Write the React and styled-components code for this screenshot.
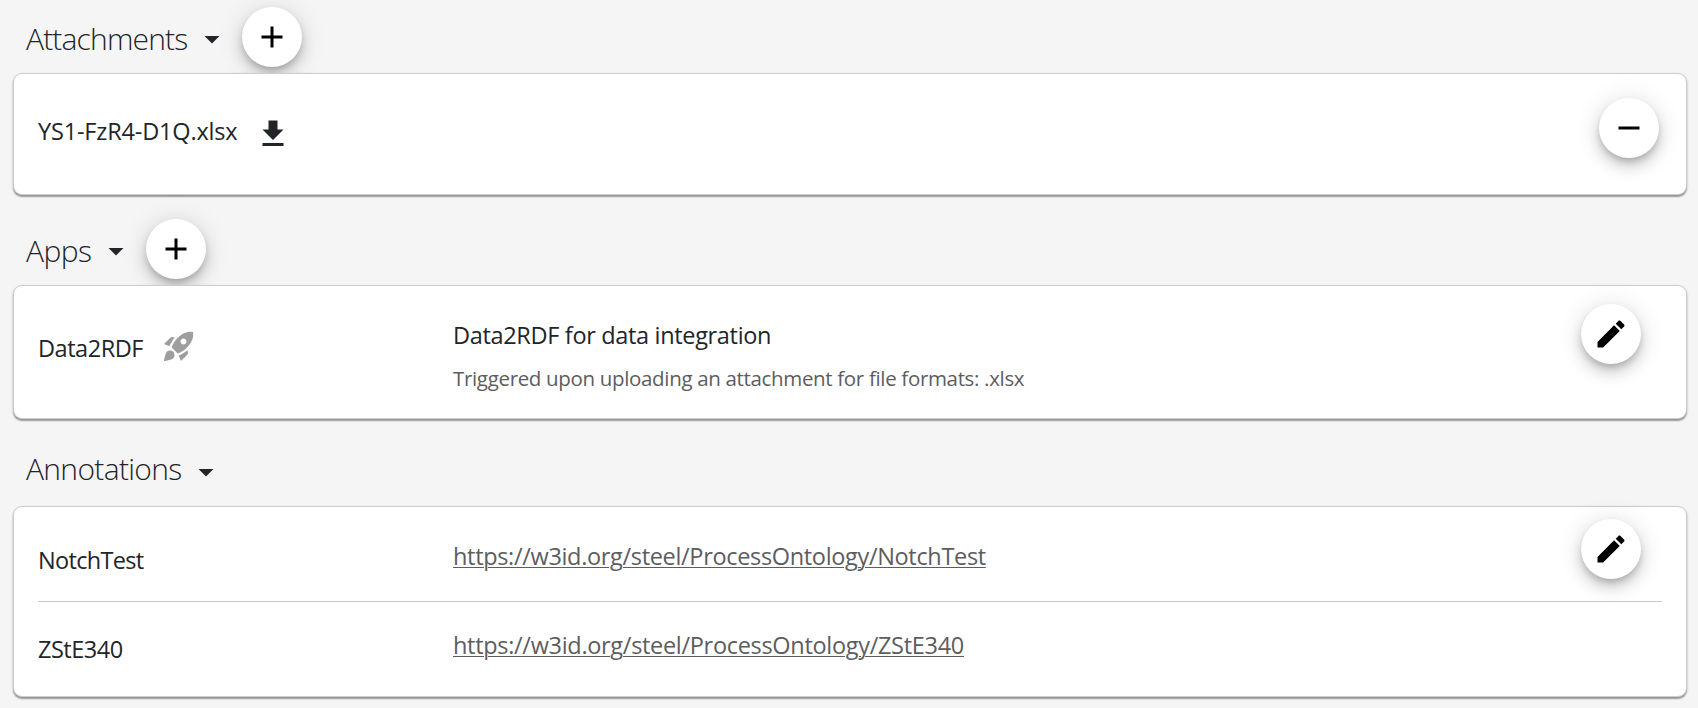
import React from 'react';
import styled, { createGlobalStyle } from 'styled-components';

const GlobalStyle = createGlobalStyle`
  * { box-sizing: border-box; }
  body {
    margin: 0;
    background: #f5f5f5;
    color: #212529;
    font-family: 'Segoe UI', 'Open Sans', 'Noto Sans', sans-serif;
    overflow: hidden;
  }
`;

const Page = styled.main`
  height: 708px;
  padding: 0 11px 0 13px;
`;

const Header = styled.header`
  display: flex;
  align-items: flex-start;
  height: ${(p) => p.$height}px;
  padding: ${(p) => p.$top}px 0 0 13px;
`;

const Heading = styled.h2`
  margin: 12px 0 0;
  width: ${(p) => p.$width}px;
  font-size: 30px;
  font-weight: 300;
  line-height: 40px;
  letter-spacing: ${(p) => p.$spacing}px;
  white-space: nowrap;
`;

const Icon = styled.svg`
  display: block;
  flex: none;
  width: 36px;
  height: 36px;
  fill: ${(p) => p.$color || 'currentColor'};
`;

const Caret = styled(Icon)`
  margin-top: ${(p) => p.$top}px;
  margin-right: 12px;
`;

const RoundButton = styled.button`
  display: flex;
  flex: none;
  align-items: center;
  justify-content: center;
  width: 60px;
  height: 60px;
  margin: 0;
  padding: 0;
  border: 0;
  border-radius: 50%;
  background: #fff;
  color: #000;
  box-shadow: 0 4.5px 7.5px -1.5px rgba(0, 0, 0, 0.2), 0 9px 15px 0 rgba(0, 0, 0, 0.14),
    0 1.5px 27px 0 rgba(0, 0, 0, 0.12);
`;

const Card = styled.section`
  height: ${(p) => p.$height}px;
  padding: 0 24px;
  border: 1px solid #ccc;
  border-radius: 9px;
  background: #fff;
  position: relative;
  box-shadow: 0 2px 1.5px 0 rgba(0, 0, 0, 0.34), 0 1px 3px 0 rgba(0, 0, 0, 0.12);
`;

const Row = styled.div`
  display: flex;
  align-items: flex-start;
  height: ${(p) => p.$height}px;
  border-bottom: ${(p) => (p.$divider ? '1px solid #c8c8c8' : '0')};
`;

const NameCell = styled.div`
  display: flex;
  flex: none;
  align-items: flex-start;
  width: 415px;
  padding-top: ${(p) => p.$top}px;
`;

const DetailCell = styled.div`
  flex: 1;
  padding-top: ${(p) => p.$top}px;
`;

const ActionCell = styled.div`
  padding: ${(p) => p.$top}px ${(p) => p.$right}px 0 0;
`;

const Label = styled.div`
  font-size: 23.5px;
  line-height: 32px;
  letter-spacing: ${(p) => p.$spacing}px;
  white-space: nowrap;
`;

const NameLabel = styled(Label)`
  width: ${(p) => (p.$width ? `${p.$width}px` : 'auto')};
`;

const Hint = styled(Label)`
  margin-top: 11px;
  color: #5c5d60;
  font-size: 20.5px;
`;

const Link = styled.a`
  color: #5c5d60;
  text-decoration: underline;
  text-decoration-thickness: 1px;
  text-underline-offset: 2px;
`;

const ItemIcon = styled(Icon)`
  margin-top: ${(p) => p.$top}px;
`;

const paths = {
  caret: 'M7 10l5 5 5-5z',
  add: 'M19 13h-6v6h-2v-6H5v-2h6V5h2v6h6v2z',
  remove: 'M19 13H5v-2h14v2z',
  edit: 'M3 17.25V21h3.75L17.81 9.94l-3.75-3.75L3 17.25zM20.71 7.04c.39-.39.39-1.02 0-1.41l-2.34-2.34c-.39-.39-1.02-.39-1.41 0l-1.83 1.83 3.75 3.75 1.83-1.83z',
  download: 'M19 9h-4V3H9v6H5l7 7 7-7zM5 18v2h14v-2H5z',
  rocket:
    'M9.19 6.35c-2.04 2.29-3.44 5.58-3.57 5.89L2 10.69l4.05-4.05c.47-.47 1.15-.68 1.81-.55l1.33.26zM11.17 17s3.74-1.55 5.89-3.7c5.4-5.4 4.5-9.62 4.21-10.57-.95-.3-5.17-1.19-10.57 4.21C8.55 9.09 7 12.83 7 12.83L11.17 17zm6.48-2.19c-2.29 2.04-5.58 3.44-5.89 3.57L13.31 22l4.05-4.05c.47-.47.68-1.15.55-1.81l-.26-1.33zM9 18c0 .83-.34 1.58-.88 2.12C6.94 21.3 2 22 2 22s.7-4.94 1.88-6.12A2.996 2.996 0 0 1 9 18zm4-9c0-1.1.9-2 2-2s2 .9 2 2-.9 2-2 2-2-.9-2-2z',
};

function ActionButton({ icon, label }) {
  return (
    <RoundButton aria-label={label}>
      <Icon viewBox="0 0 24 24">
        <path d={paths[icon]} />
      </Icon>
    </RoundButton>
  );
}

function SectionHeader({ title, height, top, width, spacing, caretTop = 14, addable }) {
  return (
    <Header $height={height} $top={top}>
      <Heading $width={width} $spacing={spacing}>
        {title}
      </Heading>
      <Caret viewBox="0 0 24 24" $top={caretTop}>
        <path d={paths.caret} />
      </Caret>
      {addable && <ActionButton icon="add" label={`Add to ${title}`} />}
    </Header>
  );
}

export default function App() {
  return (
    <>
      <GlobalStyle />
      <Page>
        <SectionHeader title="Attachments" height={73} top={7} width={168} spacing={-0.84} addable />
        <Card $height={122}>
          <Row $height={120}>
            <NameCell $top={41}>
              <NameLabel $spacing={-0.17} $width={217}>
                YS1-FzR4-D1Q.xlsx
              </NameLabel>
              <ItemIcon viewBox="0 0 24 24" $top={1}>
                <path d={paths.download} />
              </ItemIcon>
            </NameCell>
            <DetailCell />
            <ActionCell $top={24} $right={3}>
              <ActionButton icon="remove" label="Remove attachment" />
            </ActionCell>
          </Row>
        </Card>

        <SectionHeader title="Apps" height={90} top={24} width={72} spacing={-0.57} addable />
        <Card $height={134}>
          <Row $height={132}>
            <NameCell $top={46}>
              <NameLabel $spacing={-0.47} $width={123.3}>
                Data2RDF
              </NameLabel>
              <ItemIcon viewBox="0 0 24 24" $color="#9e9e9e" $top={-4}>
                <path d={paths.rocket} fillRule="evenodd" />
              </ItemIcon>
            </NameCell>
            <DetailCell $top={33}>
              <Label $spacing={-0.33}>Data2RDF for data integration</Label>
              <Hint $spacing={-0.332}>
                Triggered upon uploading an attachment for file formats: .xlsx
              </Hint>
            </DetailCell>
            <ActionCell $top={18} $right={21}>
              <ActionButton icon="edit" label="Edit app" />
            </ActionCell>
          </Row>
        </Card>

        <SectionHeader title="Annotations" height={87} top={18} width={162} spacing={-0.68} caretTop={17} />
        <Card $height={191}>
          <Row $height={95} $divider>
            <NameCell $top={37}>
              <NameLabel $spacing={-0.68}>NotchTest</NameLabel>
            </NameCell>
            <DetailCell $top={33}>
              <Label $spacing={-0.33}>
                <Link>https://w3id.org/steel/ProcessOntology/NotchTest</Link>
              </Label>
            </DetailCell>
            <ActionCell $top={12} $right={21}>
              <ActionButton icon="edit" label="Edit annotations" />
            </ActionCell>
          </Row>
          <Row $height={94}>
            <NameCell $top={31}>
              <NameLabel $spacing={-0.5}>ZStE340</NameLabel>
            </NameCell>
            <DetailCell $top={27}>
              <Label $spacing={-0.31}>
                <Link>https://w3id.org/steel/ProcessOntology/ZStE340</Link>
              </Label>
            </DetailCell>
          </Row>
        </Card>
      </Page>
    </>
  );
}
